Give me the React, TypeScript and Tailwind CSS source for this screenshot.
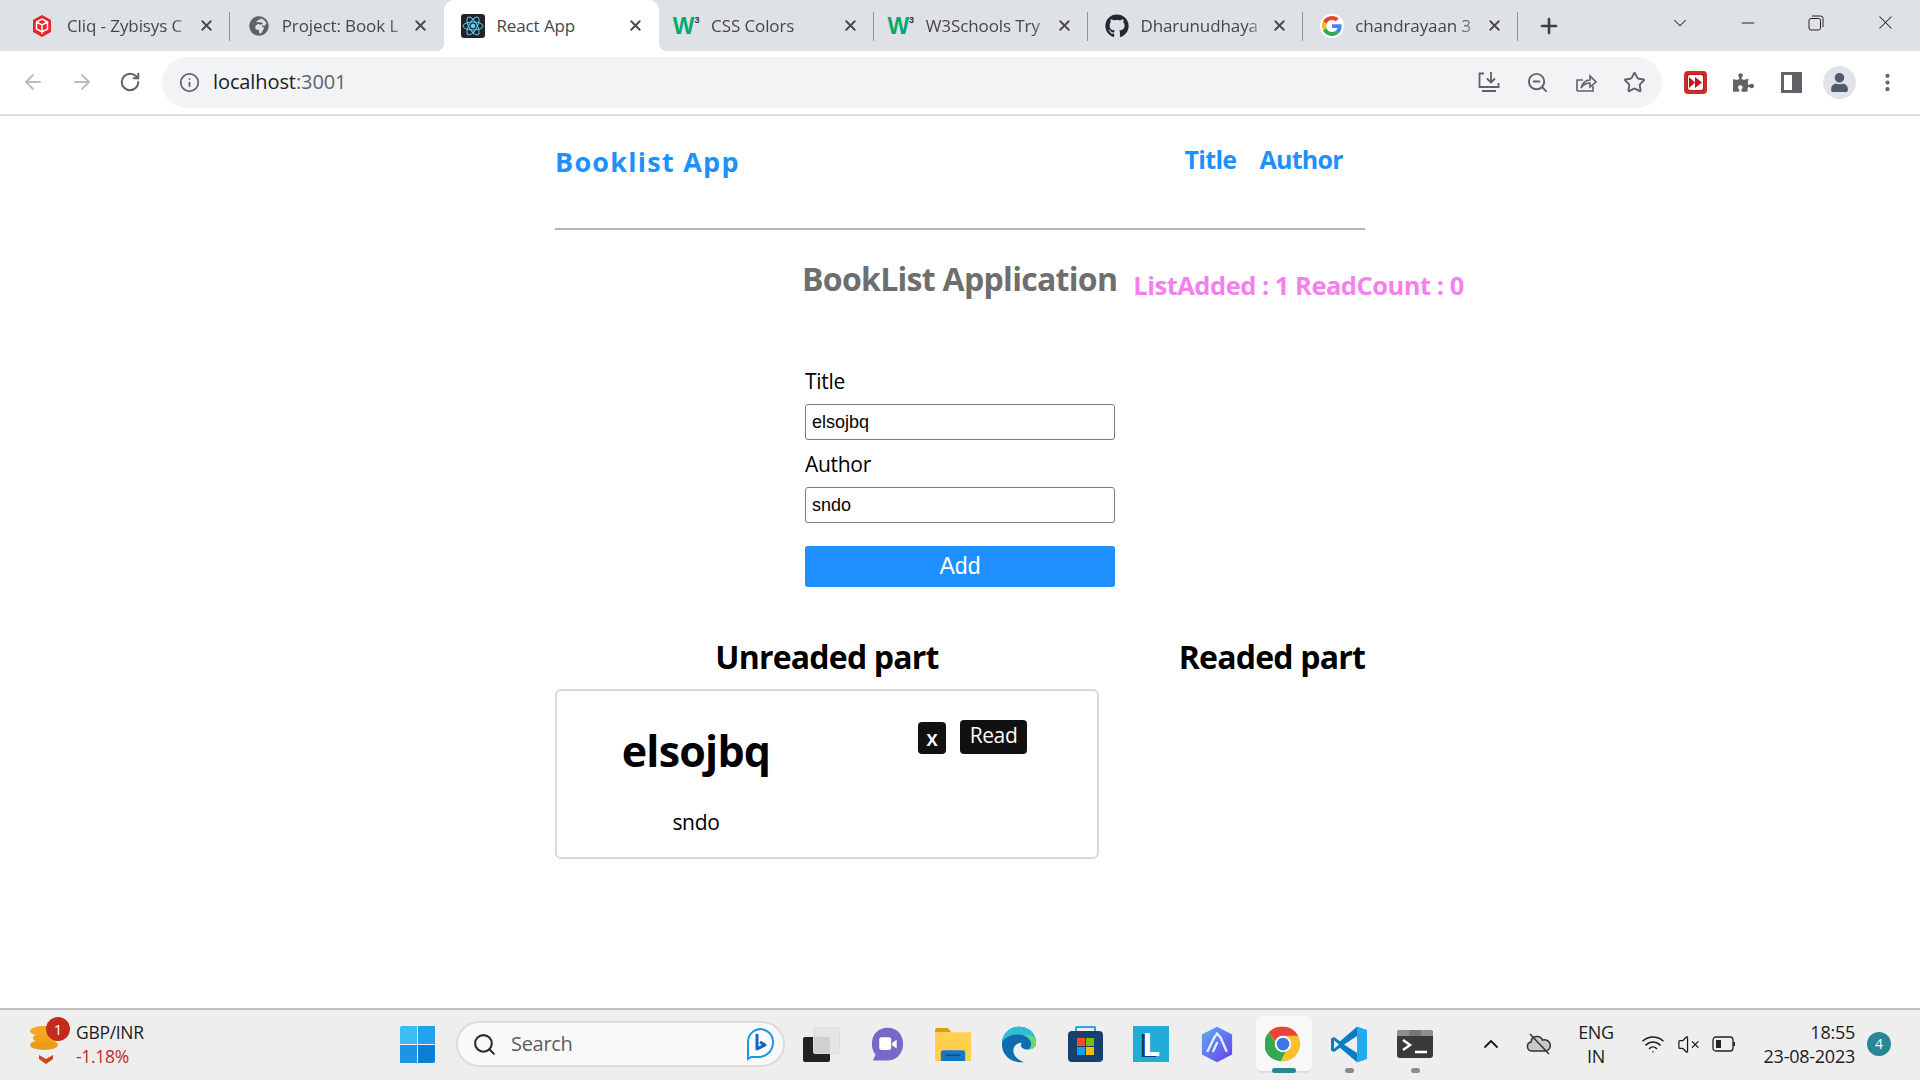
import React from "react";
import { ArrowLeft, ArrowRight, RotateCw, Info, X, Plus, ChevronDown, ChevronUp, Minus, ZoomOut, Star, Search, Wifi, VolumeX, MoreVertical } from "lucide-react";
import { FaGithub, FaGlobeAfrica, FaPuzzlePiece, FaUser } from "react-icons/fa";

const W3 = () => (
  <span className="flex items-start font-['Liberation_Sans',sans-serif] font-bold text-[#04aa6d] leading-none -translate-x-[2px]">
    <span className="text-[23px] leading-[22px]">W</span>
    <span className="text-[9px] text-[#333] leading-[10px]">3</span>
  </span>
);

const CliqIcon = () => (
  <svg className="-translate-x-[2px]" width="20" height="24" viewBox="0 0 20 24">
    <path d="M10 1 19 6v12l-9 5-9-5V6z" fill="#e8262a" />
    <path d="M10 5l5.5 3v7L10 18l-5.5-3V8z M4.500 8 10 11l5.500-3 M10 11v9" fill="none" stroke="#fff" strokeWidth="1.500" />
  </svg>
);

const ReactIcon = () => (
  <div className="w-[24px] h-[24px] rounded-[3px] bg-[#20232a] flex items-center justify-center">
    <svg width="22" height="22" viewBox="-11.500 -11.500 23 23" fill="none" stroke="#61dafb" strokeWidth="1">
      <circle r="2" fill="#61dafb" />
      <ellipse rx="10.500" ry="4.200" />
      <ellipse rx="10.500" ry="4.200" transform="rotate(60)" />
      <ellipse rx="10.500" ry="4.200" transform="rotate(120)" />
    </svg>
  </div>
);

const GoogleIcon = () => (
  <div className="w-[24px] h-[24px] rounded-full bg-white flex items-center justify-center">
    <svg width="20" height="20" viewBox="0 0 48 48">
      <path fill="#EA4335" d="M24 9.500c3.500 0 6.700 1.200 9.200 3.600l6.900-6.900C35.900 2.400 30.500 0 24 0 14.600 0 6.500 5.400 2.600 13.200l8 6.200C12.500 13.700 17.800 9.500 24 9.500z" />
      <path fill="#4285F4" d="M46.900 24.500c0-1.600-.1-3.100-.4-4.500H24v9h12.900c-.6 3-2.200 5.500-4.700 7.200l7.700 6c4.500-4.200 7-10.300 7-17.700z" />
      <path fill="#FBBC05" d="M10.500 28.600c-.5-1.400-.8-3-.8-4.600s.3-3.200.8-4.600l-8-6.200C.9 16.500 0 20.100 0 24s.9 7.500 2.600 10.800l7.900-6.200z" />
      <path fill="#34A853" d="M24 48c6.500 0 11.900-2.100 15.900-5.800l-7.700-6c-2.200 1.500-4.900 2.300-8.200 2.300-6.200 0-11.500-4.200-13.400-9.900l-8 6.200C6.500 42.600 14.600 48 24 48z" />
    </svg>
  </div>
);

type TabProps = { icon: React.ReactNode; title: string; active?: boolean; sep?: boolean };

const Tab = ({ icon, title, active, sep }: TabProps) => (
  <div className={`relative w-[214.700px] h-[51px] flex items-center pl-[17px] pr-[15px] shrink-0 ${active ? "bg-white rounded-t-[10px]" : ""}`}>
    <div className="w-[24px] flex items-center justify-center shrink-0">{icon}</div>
    <div className={`ml-[11px] w-[126px] overflow-hidden whitespace-nowrap text-[17px] tracking-[-0.100px] text-[#45474a] ${active ? "" : "[mask-image:linear-gradient(to_right,black_85%,transparent_100%)]"}`}>
      {title}
    </div>
    <X className="ml-auto text-[#45474a]" size={17} strokeWidth={2.600} />
    {sep && <div className="absolute right-0 top-[12px] h-[29px] w-px bg-[#8f9296]" />}
    {active && <div className="absolute left-[-8px] bottom-0 w-[8px] h-[8px] bg-[radial-gradient(circle_at_0_0,transparent_8px,white_8px)]" />}
    {active && <div className="absolute right-[-8px] bottom-0 w-[8px] h-[8px] bg-[radial-gradient(circle_at_100%_0,transparent_8px,white_8px)]" />}
  </div>
);

const TabStrip = () => (
  <div className="h-[51px] bg-[#dee1e6] flex items-start pl-[15px] shrink-0">
    <Tab icon={<CliqIcon />} title="Cliq - Zybisys C" sep />
    <Tab icon={<FaGlobeAfrica size={20} color="#5f6368" />} title="Project: Book L" />
    <Tab icon={<ReactIcon />} title="React App" active />
    <Tab icon={<W3 />} title="CSS Colors" sep />
    <Tab icon={<W3 />} title="W3Schools Try" sep />
    <Tab icon={<FaGithub size={24} color="#24292f" />} title="Dharunudhaya" sep />
    <Tab icon={<GoogleIcon />} title="chandrayaan 3" sep />
    <div className="w-[62px] h-[51px] flex items-center justify-center shrink-0">
      <Plus size={24} strokeWidth={2.600} className="text-[#3c4043]" />
    </div>
    <div className="ml-auto h-[45px] flex items-center text-[#222222]">
      <div className="w-[68px] flex justify-center"><ChevronDown size={22} strokeWidth={1.100} /></div>
      <div className="w-[68px] flex justify-center"><Minus size={20} strokeWidth={1.200} /></div>
      <div className="w-[68px] flex justify-center">
        <svg width="16" height="16" viewBox="0 0 16 16" fill="none" stroke="#222" strokeWidth="1">
          <rect x="1" y="3.500" width="11.500" height="11.500" rx="2" />
          <path d="M4 1h8.500A2.500 2.500 0 0 1 15 3.500V12" />
        </svg>
      </div>
      <div className="w-[70px] flex justify-center"><X size={23} strokeWidth={1.100} /></div>
    </div>
  </div>
);

const ToolIcon = ({ children }: { children: React.ReactNode }) => (
  <div className="w-[48.500px] flex items-center justify-center shrink-0">{children}</div>
);

const Toolbar = () => (
  <div className="h-[65px] bg-white border-b-2 border-[#dadce0] flex items-center shrink-0 pb-[1px]">
    <div className="w-[162px] flex pl-[9px] shrink-0">
      <ToolIcon><ArrowLeft size={24} strokeWidth={1.800} className="text-[#babcbe]" /></ToolIcon>
      <ToolIcon><ArrowRight size={24} strokeWidth={1.800} className="text-[#babcbe]" /></ToolIcon>
      <ToolIcon><RotateCw size={22} strokeWidth={2.200} className="text-[#5f6368]" /></ToolIcon>
    </div>
    <div className="w-[1500px] h-[51px] rounded-full bg-[#f1f3f4] flex items-center pl-[17px] pr-[3px] shrink-0">
      <Info size={21} strokeWidth={2} className="text-[#5f6368]" />
      <span className="ml-[13px] text-[20px] tracking-[-0.100px] text-[#202124]">localhost<span className="text-[#5f6368]">:3001</span></span>
      <div className="ml-auto flex items-center">
        <ToolIcon>
          <svg width="24" height="24" viewBox="0 0 24 24" fill="none" stroke="#5f6368" strokeWidth="1.800">
            <path d="M7 3.500H2.500v13.500h19V13M5 21h14" />
            <path d="M14 2v10M10 8.500l4 4 4-4" />
          </svg>
        </ToolIcon>
        <ToolIcon><ZoomOut size={23} strokeWidth={2} className="text-[#5f6368]" /></ToolIcon>
        <ToolIcon>
          <svg width="24" height="24" viewBox="0 0 24 24" fill="none" stroke="#5f6368" strokeWidth="1.600">
            <path d="M3 21V10h6M3 21h16v-5" />
            <path d="M7 18c1-5 5-8 9-8V6l6 6-6 5v-4c-4 0-7 2-9 5z" />
          </svg>
        </ToolIcon>
        <ToolIcon><Star size={23} strokeWidth={2} className="text-[#5f6368]" /></ToolIcon>
      </div>
    </div>
    <div className="flex pl-[9px]">
      <ToolIcon>
        <div className="w-[23px] h-[23px] rounded-[4px] bg-[#b71c1c] border-[3px] border-[#c9302c] flex items-center justify-center">
          <div className="w-[15px] h-[15px] bg-white rounded-[2px] flex items-center justify-center">
            <svg width="13" height="11" viewBox="0 0 13 11" fill="#c1121f"><path d="M0 0l6 5.500L0 11zM6 0l7 5.500L6 11z" /></svg>
          </div>
        </div>
      </ToolIcon>
      <ToolIcon><FaPuzzlePiece size={21} color="#5f6368" /></ToolIcon>
      <ToolIcon>
        <div className="w-[21px] h-[21px] border-[3px] border-[#5f6368] border-r-[10px] bg-white -translate-x-[1px]" />
      </ToolIcon>
      <ToolIcon>
        <div className="w-[33px] h-[33px] rounded-full bg-[#e1e3e8] flex items-center justify-center overflow-hidden -translate-x-[1px]">
          <FaUser size={19} color="#4f5a6b" />
        </div>
      </ToolIcon>
      <ToolIcon><MoreVertical size={23} strokeWidth={2.400} className="text-[#5f6368] -translate-x-[2px]" /></ToolIcon>
    </div>
  </div>
);

const Page = () => (
  <main className="flex-1 bg-white overflow-hidden font-['Open_Sans',sans-serif]">
    <div className="w-[810px] mx-auto">
      <header className="h-[114px] border-b-2 border-[#b5b5b5] flex justify-between items-start">
        <span className="mt-[27px] h-[38px] leading-[38px] text-[27px] font-bold tracking-[1.250px] text-[#1e90ff]">Booklist App</span>
        <nav className="mt-[24px] mr-[22px] flex gap-[23px] h-[38px] leading-[38px] text-[25px] font-bold tracking-[-0.700px] text-[#1e90ff]">
          <a>Title</a>
          <a>Author</a>
        </nav>
      </header>
      <div className="mt-[27px] pl-[247px] h-[44px] flex items-center whitespace-nowrap">
        <h2 className="text-[32px] font-bold tracking-[-0.700px] text-[#6e6e6e]">BookList Application</h2>
        <span className="ml-[16px] mt-[12px] text-[25.500px] font-bold tracking-[-0.500px] text-[#f67ff0]">ListAdded : 1 ReadCount : 0</span>
      </div>
      <form className="ml-[250px] w-[310px] mt-[66px]">
        <label className="block h-[28px] leading-[28px] text-[21px] tracking-[-0.300px] text-black">Title</label>
        <input readOnly value="elsojbq" className="mt-[9px] block w-full h-[36px] px-[6px] border border-[#767f8c] rounded-[3px] text-[18px] text-black font-['Liberation_Sans',sans-serif]" />
        <label className="mt-[10px] block h-[28px] leading-[28px] text-[21px] tracking-[-0.300px] text-black">Author</label>
        <input readOnly value="sndo" className="mt-[9px] block w-full h-[36px] px-[6px] border border-[#767f8c] rounded-[3px] text-[18px] text-black font-['Liberation_Sans',sans-serif]" />
        <button type="button" className="mt-[23px] block w-full h-[41px] rounded-[3px] bg-[#1e90ff] text-white text-[23px] font-['Liberation_Sans',sans-serif]">Add</button>
      </form>
      <div className="mt-[48px] flex items-start">
        <section className="w-[544px] shrink-0">
          <h3 className="h-[44px] leading-[44px] text-center text-[32px] font-bold tracking-[-0.800px] text-black">Unreaded part</h3>
          <div className="mt-[10px] h-[170px] border-2 border-[#d9d9d9] rounded-[6px] flex items-start">
            <div className="ml-[64px] w-[150px] text-center">
              <div className="mt-[30px] h-[60px] leading-[60px] text-[43px] font-bold tracking-[-0.800px] text-black">elsojbq</div>
              <div className="mt-[26px] h-[30px] leading-[30px] text-[21px] tracking-[-0.300px] text-black">sndo</div>
            </div>
            <button type="button" className="ml-[147px] mt-[31px] w-[28px] h-[32px] rounded-[4px] bg-[#111111] text-white text-[21px] font-semibold leading-[30px]">x</button>
            <button type="button" className="ml-[14px] mt-[29px] w-[67px] h-[34px] rounded-[4px] bg-[#111111] text-white text-[21px] tracking-[-0.400px] leading-[30px] pb-[4px]">Read</button>
          </div>
        </section>
        <section className="flex-1 text-right">
          <h3 className="h-[44px] leading-[44px] text-[32px] font-bold tracking-[-0.800px] text-black whitespace-nowrap">Readed part</h3>
        </section>
      </div>
    </div>
  </main>
);

const TaskIcon = ({ children, active, dot }: { children: React.ReactNode; active?: boolean; dot?: boolean }) => (
  <div className="relative w-[66px] h-[70px] flex items-center justify-center shrink-0 pb-[2px]">
    {active && <div className="absolute left-[6px] w-[56px] top-[6px] h-[57px] rounded-[6px] bg-[#f8f8f8] border-b-2 border-[#dedede]" />}
    <div className="relative flex">{children}</div>
    {active && <div className="absolute left-[22px] top-[58px] w-[24px] h-[5px] rounded-full bg-[#2a8596]" />}
    {dot && <div className="absolute left-[29px] top-[58px] w-[9px] h-[5px] rounded-full bg-[#8b8b8b]" />}
  </div>
);

const Taskbar = () => (
  <footer className="h-[72px] bg-[#eeeeee] border-t-2 border-[#bfbfbf] flex items-center shrink-0 font-['Open_Sans',sans-serif]">
    <div className="w-[400px] flex items-center shrink-0">
      <div className="relative ml-[28px] w-[48px] h-[52px]">
        <svg width="36" height="52" viewBox="0 0 36 52">
          <ellipse cx="16" cy="26" rx="14" ry="5" fill="#ee9b1a" />
          <ellipse cx="18" cy="19" rx="13" ry="5" fill="#f2a21f" />
          <ellipse cx="16" cy="12" rx="14" ry="5" fill="#f5a623" />
          <path d="M11 36l7 4 7-4v4l-7 5-7-5z" fill="#c8481a" />
        </svg>
        <div className="absolute left-[18px] top-[-2px] w-[24px] h-[24px] rounded-full bg-[#c42b1c] text-white text-[15px] leading-[24px] text-center">1</div>
      </div>
      <div className="text-[17.500px] leading-[24px] tracking-[-0.300px] -mt-[2px]">
        <div className="text-[#1b1b1b]">GBP/INR</div>
        <div className="text-[#c42b1c]">-1.18%</div>
      </div>
    </div>
    <div className="w-[35px] h-[37px] grid grid-cols-2 grid-rows-2 gap-[1px] shrink-0 -mt-[2px]">
      <div className="bg-[#39bdf3] rounded-tl-[2px]" />
      <div className="bg-[#20a3ec]" />
      <div className="bg-[#1b95e4]" />
      <div className="bg-[#0a7fd6] rounded-br-[2px]" />
    </div>
    <div className="ml-[21px] w-[329px] h-[46px] -mt-[2px] rounded-full bg-[#f9f9f9] border-2 border-[#dcdcdc] flex items-center pl-[14px] pr-[7px] shrink-0">
      <Search size={25} strokeWidth={2} className="text-[#2b2b2b]" />
      <span className="ml-[14px] text-[20px] tracking-[-0.300px] text-[#5d5d5d]">Search</span>
      <svg className="ml-auto -translate-x-[1px]" width="30" height="34" viewBox="0 0 30 34" fill="none">
        <path d="M15 2a13 13 0 0 1 13 13c0 9-6 14-13 15H6l-3 2V15A13 13 0 0 1 15 2z" stroke="#1a9ae0" strokeWidth="2" fill="#fdfdfd" />
        <path d="M12 7v15l8-4-5-3" stroke="#1166c5" strokeWidth="3" strokeLinejoin="round" />
      </svg>
    </div>
    <div className="ml-[3px] flex items-center shrink-0">
      <TaskIcon>
        <div className="relative w-[37px] h-[35px]">
          <div className="absolute left-0 bottom-0 w-[27px] h-[25px] rounded-[2px] bg-[#222222]" />
          <div className="absolute right-0 top-0 w-[27px] h-[27px] rounded-[2px] bg-[#e3e3e3]/90 border border-[#dddddd]" />
        </div>
      </TaskIcon>
      <TaskIcon>
        <svg width="33" height="35" viewBox="0 0 36 44" preserveAspectRatio="none">
          <path d="M18 1c10 0 17 8 17 20s-7 21-17 21H2l3-7C2 31 1 26 1 21 1 9 8 1 18 1z" fill="#7a68c8" />
          <rect x="9" y="13" width="13" height="16" rx="2.500" fill="#fff" />
          <path d="M23 20l5-4v11l-5-4z" fill="#fff" />
        </svg>
      </TaskIcon>
      <TaskIcon>
        <svg width="36" height="33" viewBox="0 0 37 40" preserveAspectRatio="none">
          <path d="M0 2a2 2 0 0 1 2-2h11l4 5H0z" fill="#dba00e" />
          <rect x="0" y="5" width="37" height="35" rx="1" fill="#ffd04d" />
          <path d="M6 40V30a3 3 0 0 1 3-3h19a3 3 0 0 1 3 3v10z" fill="#1478c8" />
          <rect x="11" y="32" width="15" height="2" fill="#0c4e8a" />
        </svg>
      </TaskIcon>
      <TaskIcon>
        <svg width="36" height="37" viewBox="0 0 38 44" preserveAspectRatio="none">
          <path d="M19 1c11 0 18 9 18 19 0 5-4 8-9 8-4 0-7-2-7-5 0-2 1-3 1-3-5 0-9 4-9 9 0 7 6 13 13 14C11 45 1 35 1 22 1 10 9 1 19 1z" fill="#0f6cb0" />
          <path d="M1 19C2 8 10 1 19 1c11 0 18 9 18 19 0 5-4 8-9 8 3-1 4-4 4-6 0-7-6-12-14-12-8 0-14 4-17 9z" fill="#2ebdd6" />
          <path d="M37 20c0 5-4 8-9 8 3-1 4-4 4-6 0-5-3-9-8-11C32 10 37 14 37 20z" fill="#6bd86b" />
        </svg>
      </TaskIcon>
      <TaskIcon>
        <div className="relative w-[35px] h-[36px]">
          <div className="absolute left-[7px] top-0 w-[21px] h-[10px] border-2 border-b-0 border-[#2aa8e0] rounded-t-[2px]" />
          <div className="absolute left-0 bottom-0 w-[35px] h-[31px] rounded-[4px] bg-[#16406f] flex items-center justify-center">
            <div className="w-[17px] h-[17px] grid grid-cols-2 grid-rows-2 gap-[1px]">
              <div className="bg-[#f25022]" />
              <div className="bg-[#7fba00]" />
              <div className="bg-[#00a4ef]" />
              <div className="bg-[#ffb900]" />
            </div>
          </div>
        </div>
      </TaskIcon>
      <TaskIcon>
        <div className="w-[36px] h-[36px] bg-[#24acd8] flex items-center justify-center text-white text-[32px] font-bold leading-none [text-shadow:-3px_1px_0_#123a6b]">L</div>
      </TaskIcon>
      <TaskIcon>
        <svg width="34" height="37" viewBox="0 0 36 44" preserveAspectRatio="none" fill="none">
          <defs>
            <linearGradient id="arc" x1="0" y1="0" x2="1" y2="1">
              <stop offset="0" stopColor="#5aaef0" />
              <stop offset="1" stopColor="#6a3df0" />
            </linearGradient>
          </defs>
          <path d="M18 1l16 9v24l-16 9-16-9V10z" fill="url(#arc)" />
          <path d="M8 30 15 14M14 30 18 20M22 14 28 30" stroke="#e8eeff" strokeWidth="2.500" strokeLinecap="round" />
          <path d="M15 14 18 9 22 14" stroke="#e8eeff" strokeWidth="2.500" />
        </svg>
      </TaskIcon>
      <TaskIcon active>
        <svg width="36" height="36" viewBox="0 0 48 48">
          <circle cx="24" cy="24" r="23" fill="#fbc02d" />
          <path d="M24 1a23 23 0 0 1 20 12H24a11 11 0 0 0-10.400 7.500L5 8.500A23 23 0 0 1 24 1z" fill="#ea4335" />
          <path d="M5 8.500l9 14a11 11 0 0 0 13 12L21 47A23 23 0 0 1 5 8.500z" fill="#34a853" />
          <circle cx="24" cy="24" r="11" fill="#fff" />
          <circle cx="24" cy="24" r="8.500" fill="#3b78e7" />
        </svg>
      </TaskIcon>
      <TaskIcon dot>
        <svg width="36" height="37" viewBox="0 0 36 44" preserveAspectRatio="none">
          <path d="M26 1 9 18 3 13 0 15v14l3 2 6-5 17 17 10-4V5z" fill="#0a7cc4" />
          <path d="M26 1l10 4v34l-10 4z" fill="#24a9f2" />
          <path d="M26 12 13 22l13 10z" fill="#eeeeee" />
          <path d="M3 17v10l5-5z" fill="#eeeeee" />
        </svg>
      </TaskIcon>
      <TaskIcon dot>
        <div className="w-[36px] h-[28px] rounded-[3px] bg-[#3a3a3a] overflow-hidden relative">
          <div className="h-[6px] flex">
            <div className="w-[12px] bg-[#8f8f8f]" />
            <div className="w-[12px] bg-[#757575]" />
            <div className="w-[12px] bg-[#8f8f8f]" />
          </div>
          <svg className="absolute left-[5px] top-[9px]" width="26" height="16" viewBox="0 0 26 16" fill="none" stroke="#fff" strokeWidth="2.500">
            <path d="M1 1l7 5-7 5" />
            <path d="M13 13h12" />
          </svg>
        </div>
      </TaskIcon>
    </div>
    <div className="ml-[19px] flex items-center text-[#1b1b1b] shrink-0 -mt-[2px]">
      <div className="w-[48px] flex justify-center"><ChevronUp size={24} strokeWidth={1.800} /></div>
      <div className="w-[48px] flex justify-center">
        <svg width="26" height="24" viewBox="0 0 26 24" fill="none" stroke="#333" strokeWidth="1.500">
          <path d="M6 19a4.500 4.500 0 0 1-1-8.900 6 6 0 0 1 11.500-2A5.500 5.500 0 0 1 20.500 19z" fill="#c9c9c9" />
          <path d="M4 2l19 20" />
        </svg>
      </div>
      <div className="w-[66px] text-center text-[18px] leading-[24px] tracking-[-0.300px]">ENG<br />IN</div>
      <div className="ml-[6px] w-[36px] flex justify-center"><Wifi size={24} strokeWidth={1.500} /></div>
      <div className="w-[35px] flex justify-center"><VolumeX size={23} strokeWidth={1.300} /></div>
      <div className="w-[36px] flex justify-center">
        <svg width="24" height="16" viewBox="0 0 24 16" fill="none" stroke="#222" strokeWidth="1.300">
          <rect x="1" y="1" width="20" height="14" rx="3" />
          <rect x="4" y="4" width="5" height="8" fill="#222" stroke="none" />
          <path d="M22 6v4" strokeWidth="2" />
        </svg>
      </div>
      <div className="w-[113px] text-right text-[18px] leading-[24px] tracking-[-0.250px]">18:55<br />23-08-2023</div>
      <div className="ml-[12px] w-[24px] h-[24px] rounded-full bg-[#2a8596] text-white text-[14px] leading-[24px] text-center">4</div>
    </div>
  </footer>
);

export default function App() {
  return (
    <div className="w-[1920px] h-[1080px] flex flex-col overflow-hidden font-['Open_Sans',sans-serif]">
      <TabStrip />
      <Toolbar />
      <Page />
      <Taskbar />
    </div>
  );
}
